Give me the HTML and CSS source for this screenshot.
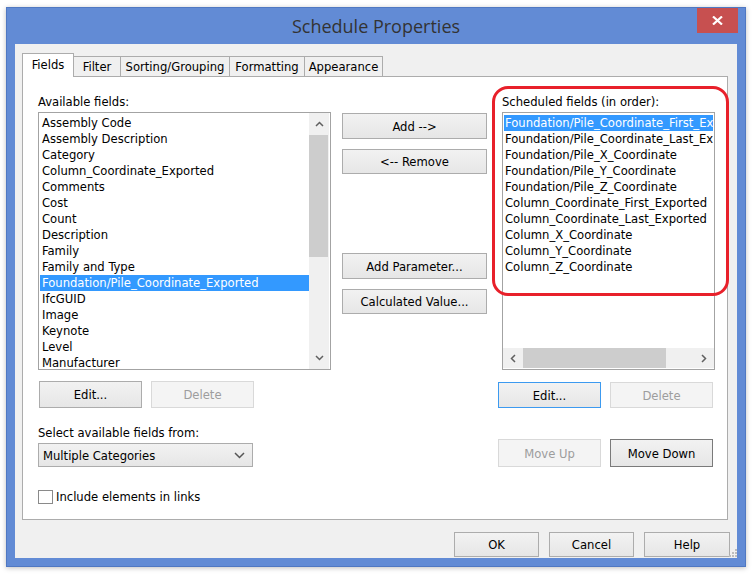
FILE: index.html
```html
<!DOCTYPE html>
<html>
<head>
<meta charset="utf-8">
<title>Schedule Properties</title>
<link rel="stylesheet" href="styles.css">
</head>
<body>
<div class="window">
  <div class="titlebar">
    <div></div>
    <div class="title">Schedule Properties</div>
    <div class="close">
      <svg width="11" height="9" viewBox="0 0 11 9"><path d="M1 0.5 L10 8.5 M10 0.5 L1 8.5" stroke="#fff" stroke-width="2.2" fill="none"/></svg>
    </div>
  </div>
  <div class="client">
    <div class="tabs">
      <div class="tab active t-fields">Fields</div>
      <div class="tab t-filter">Filter</div>
      <div class="tab t-sort">Sorting/Grouping</div>
      <div class="tab t-format">Formatting</div>
      <div class="tab t-appear">Appearance</div>
    </div>
    <div class="panel">
      <div class="col left">
        <div class="label">Available fields:</div>
        <div class="listbox">
          <div class="items">
            <div class="item">Assembly Code</div>
            <div class="item">Assembly Description</div>
            <div class="item">Category</div>
            <div class="item">Column_Coordinate_Exported</div>
            <div class="item">Comments</div>
            <div class="item">Cost</div>
            <div class="item">Count</div>
            <div class="item">Description</div>
            <div class="item">Family</div>
            <div class="item">Family and Type</div>
            <div class="item selected">Foundation/Pile_Coordinate_Exported</div>
            <div class="item">IfcGUID</div>
            <div class="item">Image</div>
            <div class="item">Keynote</div>
            <div class="item">Level</div>
            <div class="item">Manufacturer</div>
          </div>
          <div class="vscroll">
            <div class="arrow"><svg width="9" height="6" viewBox="0 0 9 6"><path d="M1 5 L4.5 1.5 L8 5" stroke="#606060" stroke-width="1.5" fill="none"/></svg></div>
            <div class="vthumb"></div>
            <div class="vtrack"></div>
            <div class="arrow"><svg width="9" height="6" viewBox="0 0 9 6"><path d="M1 1 L4.5 4.5 L8 1" stroke="#606060" stroke-width="1.5" fill="none"/></svg></div>
          </div>
        </div>
        <div class="btnrow first">
          <button class="btn w103 h27">Edit...</button>
          <button class="btn w103 h27 disabled">Delete</button>
        </div>
        <div class="label sel-label">Select available fields from:</div>
        <div class="select">
          <span>Multiple Categories</span>
          <svg width="11" height="7" viewBox="0 0 11 7"><path d="M1 1 L5.5 5.5 L10 1" stroke="#555" stroke-width="1.5" fill="none"/></svg>
        </div>
        <div class="check"><span class="box"></span><span>Include elements in links</span></div>
      </div>
      <div class="col mid">
        <button class="btn h26 add">Add --&gt;</button>
        <button class="btn h25 remove">&lt;-- Remove</button>
        <button class="btn h26 param">Add Parameter...</button>
        <button class="btn h25 calc">Calculated Value...</button>
      </div>
      <div class="col right">
        <div class="label indent">Scheduled fields (in order):</div>
        <div class="listbox sched">
          <div class="items">
            <div class="item selected">Foundation/Pile_Coordinate_First_Exported</div>
            <div class="item">Foundation/Pile_Coordinate_Last_Exported</div>
            <div class="item">Foundation/Pile_X_Coordinate</div>
            <div class="item">Foundation/Pile_Y_Coordinate</div>
            <div class="item">Foundation/Pile_Z_Coordinate</div>
            <div class="item">Column_Coordinate_First_Exported</div>
            <div class="item">Column_Coordinate_Last_Exported</div>
            <div class="item">Column_X_Coordinate</div>
            <div class="item">Column_Y_Coordinate</div>
            <div class="item">Column_Z_Coordinate</div>
          </div>
          <div class="hscroll">
            <div class="harrow"><svg width="6" height="9" viewBox="0 0 6 9"><path d="M5 1 L1.5 4.5 L5 8" stroke="#606060" stroke-width="1.5" fill="none"/></svg></div>
            <div class="hthumb"></div>
            <div class="htrack"></div>
            <div class="harrow"><svg width="6" height="9" viewBox="0 0 6 9"><path d="M1 1 L4.5 4.5 L1 8" stroke="#606060" stroke-width="1.5" fill="none"/></svg></div>
          </div>
        </div>
        <div class="btnrow r1">
          <button class="btn w103 h26 focused">Edit...</button>
          <button class="btn w103 h26 disabled">Delete</button>
        </div>
        <div class="btnrow r2">
          <button class="btn w103 h28 disabled">Move Up</button>
          <button class="btn w103 h28 default">Move Down</button>
        </div>
      </div>
      <div class="annot"></div>
    </div>
    <div class="footer">
      <button class="btn fbtn">OK</button>
      <button class="btn fbtn">Cancel</button>
      <button class="btn fbtn help">Help</button>
    </div>
    <div class="grip">
      <svg width="8" height="8" viewBox="0 0 8 8"><g fill="#bdbdbd"><rect x="6" y="0" width="2" height="2"/><rect x="3" y="3" width="2" height="2"/><rect x="6" y="3" width="2" height="2"/><rect x="0" y="6" width="2" height="2"/><rect x="3" y="6" width="2" height="2"/><rect x="6" y="6" width="2" height="2"/></g></svg>
    </div>
  </div>
</div>
</body>
</html>
```
FILE: styles.css
```css
* { box-sizing: border-box; }
html, body { margin: 0; padding: 0; background: #fff; }
body {
  width: 754px;
  height: 579px;
  overflow: hidden;
  font-family: "DejaVu Sans Condensed", "Liberation Sans", sans-serif;
  font-size: 12.9px;
  color: #000;
}
.window {
  margin: 7px 0 0 6px;
  width: 740px;
  height: 560px;
  background: #628bd5;
  border: 1px solid #5078c2;
  box-shadow: 0 1px 5px rgba(0,0,0,0.25);
  display: flex;
  flex-direction: column;
}
.titlebar {
  height: 36px;
  display: grid;
  grid-template-columns: 1fr auto 1fr;
  align-items: start;
}
.title {
  font-family: "Open Sans", "Liberation Sans", sans-serif;
  font-size: 18px;
  color: #333;
  line-height: 36px;
  white-space: nowrap;
}
.close {
  justify-self: end;
  margin-right: 7px;
  width: 41px;
  height: 25px;
  background: #c75050;
  display: flex;
  align-items: center;
  justify-content: center;
}
.client {
  margin: 0 8px 8px 8px;
  height: 514px;
  background: #f0f0f0;
  padding: 9px 9px 0 7px;
  display: flex;
  flex-direction: column;
  position: relative;
}
.tabs {
  display: flex;
  align-items: flex-start;
  height: 24px;
  margin-bottom: -1px;
  position: relative;
  z-index: 1;
}
.tab {
  height: 20px;
  margin-top: 3px;
  border: 1px solid #acacac;
  border-bottom: none;
  background: #f0f0f0;
  line-height: 20px;
  text-align: center;
  white-space: nowrap;
  margin-left: -1px;
}
.tab.active {
  height: 24px;
  margin-top: 0;
  margin-left: 0;
  background: #fff;
  line-height: 22px;
  position: relative;
  z-index: 2;
}
.t-fields { width: 52px; }
.t-filter { width: 48px; }
.t-sort { width: 110px; }
.t-format { width: 76px; }
.t-appear { width: 79px; }
.panel {
  height: 444px;
  background: #fff;
  border: 1px solid #acacac;
  padding: 17px 12px 0 15px;
  display: flex;
  gap: 11px;
  position: relative;
}
.col { display: flex; flex-direction: column; }
.col.left { width: 293px; }
.col.mid { width: 145px; }
.col.right { width: 217px; }
.label { line-height: 16px; height: 16px; white-space: nowrap; }
.label.indent { margin-left: 4px; }
.listbox {
  margin-top: 2px;
  height: 258px;
  border: 1px solid #a3a3a3;
  background: #fff;
  display: flex;
  overflow: hidden;
}
.items {
  flex: 1;
  overflow: hidden;
  padding: 2px 0 0 1px;
}
.item {
  height: 16px;
  line-height: 16px;
  padding-left: 2px;
  white-space: nowrap;
  overflow: hidden;
}
.item.selected { background: #3399ff; color: #fff; }
.vscroll {
  width: 20px;
  margin-right: 1px;
  background: #f0f0f0;
  display: flex;
  flex-direction: column;
}
.arrow {
  height: 22px;
  display: flex;
  align-items: center;
  justify-content: center;
}
.vthumb { height: 122px; background: #cdcdcd; margin-right: 1px; }
.vtrack { flex: 1; }
.listbox.sched {
  margin-left: 4px;
  width: 213px;
  flex-direction: column;
}
.listbox.sched .items { padding: 2px 1px 0 1px; }
.listbox.sched .item { padding-left: 1px; }
.hscroll {
  height: 20px;
  flex: none;
  margin-bottom: 1px;
  background: #f0f0f0;
  display: flex;
}
.harrow {
  width: 20px;
  display: flex;
  align-items: center;
  justify-content: center;
}
.hthumb { width: 143px; background: #cdcdcd; }
.htrack { flex: 1; }
.btn {
  font: inherit;
  color: #000;
  background: linear-gradient(#f2f2f2, #e6e6e6);
  border: 1px solid #acacac;
  padding: 0;
  margin: 0;
  text-align: center;
  white-space: nowrap;
}
.btn.disabled {
  background: #f4f4f4;
  border-color: #d9d9d9;
  color: #9d9d9d;
}
.btn.focused { border-color: #3c9af0; }
.btn.default { border-color: #7a7a7a; }
.w103 { width: 103px; }
.h25 { height: 25px; }
.h26 { height: 26px; }
.h27 { height: 27px; }
.h28 { height: 28px; }
.btnrow { display: flex; gap: 9px; }
.btnrow.first { margin-top: 11px; margin-left: 1px; }
.sel-label { margin-top: 17px; }
.select {
  margin-top: 2px;
  width: 215px;
  height: 24px;
  border: 1px solid #acacac;
  background: linear-gradient(#f2f2f2, #e6e6e6);
  display: flex;
  align-items: center;
  justify-content: space-between;
  padding: 1px 7px 0 4px;
}
.check {
  margin-top: 22px;
  display: flex;
  align-items: center;
  gap: 3px;
  white-space: nowrap;
}
.check .box {
  width: 15px;
  height: 14px;
  border: 1px solid #8a8a8a;
  background: #fff;
}
.mid .add { margin-top: 19px; }
.mid .remove { margin-top: 10px; }
.mid .param { margin-top: 79px; }
.mid .calc { margin-top: 10px; }
.btnrow.r1 { margin-top: 12px; }
.btnrow.r2 { margin-top: 31px; }
.annot {
  position: absolute;
  left: 469px;
  top: 9px;
  width: 237px;
  height: 210px;
  border: 3px solid #e8202a;
  border-radius: 16px;
  pointer-events: none;
}
.footer {
  margin-top: 12px;
  margin-right: -2px;
  display: flex;
  justify-content: flex-end;
  gap: 10px;
}
.fbtn { width: 85px; height: 25px; }
.fbtn.help { width: 86px; }
.grip {
  position: absolute;
  right: 0;
  bottom: 1px;
  width: 8px;
  height: 8px;
  display: flex;
}
```
